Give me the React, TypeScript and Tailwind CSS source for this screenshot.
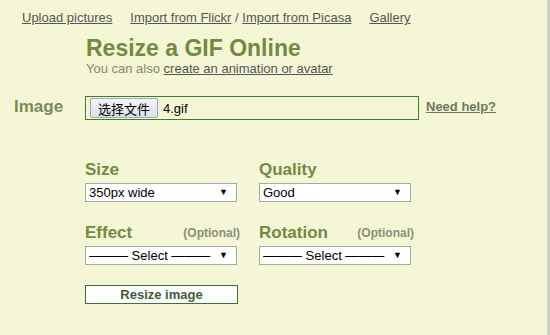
import { ReactNode } from 'react'

const font = { fontFamily: '"Liberation Sans", Arial, "Noto Sans CJK SC", sans-serif' }

function Select({ value, dashed }: { value: string; dashed?: boolean }) {
  return (
    <div className="flex h-[19px] w-[152px] items-center border border-[#a9a9a9] bg-white pl-[3px] pr-[8px] text-[13px] leading-none text-black">
      <span className="flex-1 truncate">
        {dashed ? '——— Select ———' : value}
      </span>
      <span className="text-[9px]">▼</span>
    </div>
  )
}

function Field({ label, optional, children }: { label: string; optional?: boolean; children: ReactNode }) {
  return (
    <div className="w-[156px]">
      <div className="mb-[3px] flex items-end justify-between pr-[1px]">
        <span className="text-[17px] font-bold leading-[20px] text-[#748943]">{label}</span>
        {optional ? <span className="pb-[1px] text-[12px] font-bold text-[#8a8f7a]">(Optional)</span> : null}
      </div>
      {children}
    </div>
  )
}

export default function App() {
  return (
    <div className="flex h-[335px] w-[550px] overflow-hidden" style={font}>
      <div className="flex-1 bg-[#f4f6d6]">
        <nav className="flex items-center gap-[18px] pl-[22px] pt-[8px] text-[13px] text-[#555555]">
          <a className="underline">Upload pictures</a>
          <span>
            <a className="underline">Import from Flickr</a>
            <span> / </span>
            <a className="underline">Import from Picasa</a>
          </span>
          <a className="underline">Gallery</a>
        </nav>

        <div className="ml-[86px] mt-[7px]">
          <h1 className="text-[23px] font-bold leading-[26px] text-[#748943]">Resize a GIF Online</h1>
          <p className="mt-[1px] text-[13px] leading-[14px] text-[#858a6d]">
            You can also <a className="text-[#555555] underline">create an animation or avatar</a>
          </p>
        </div>

        <div className="mt-[18px] flex items-center">
          <div className="w-[85px] shrink-0 pl-[14px] pb-[4px] text-[17px] font-bold text-[#7b8a58]">Image</div>
          <div className="flex h-[24px] w-[334px] items-center border border-[#3e7d2e] bg-[#f4f6d6] pl-[4px]">
            <button
              type="button"
              className="h-[20px] rounded-[2px] border border-[#9aa8bb] bg-gradient-to-b from-[#f4f5f8] to-[#dde2ea] px-[7px] text-[13px] leading-none text-black"
              style={{ fontFamily: '"Noto Sans CJK SC", sans-serif' }}
            >
              选择文件
            </button>
            <span className="ml-[5px] text-[13px] text-black">4.gif</span>
          </div>
          <a className="ml-[7px] pb-[4px] text-[13px] font-bold text-[#6e7a62] underline">Need help?</a>
        </div>

        <div className="ml-[85px] mt-[37px] grid w-[330px] grid-cols-[174px_156px] gap-y-[21px]">
          <Field label="Size">
            <Select value="350px wide" />
          </Field>
          <Field label="Quality">
            <Select value="Good" />
          </Field>
          <Field label="Effect" optional>
            <Select value="" dashed />
          </Field>
          <Field label="Rotation" optional>
            <Select value="" dashed />
          </Field>
        </div>

        <button
          type="button"
          className="ml-[85px] mt-[20px] h-[19px] w-[153px] border border-[#3e6f34] bg-white text-[13px] font-bold leading-none text-[#3f5c36]"
        >
          Resize image
        </button>
      </div>
      <div className="w-[3px] bg-[#c8d3cc]" />
    </div>
  )
}
